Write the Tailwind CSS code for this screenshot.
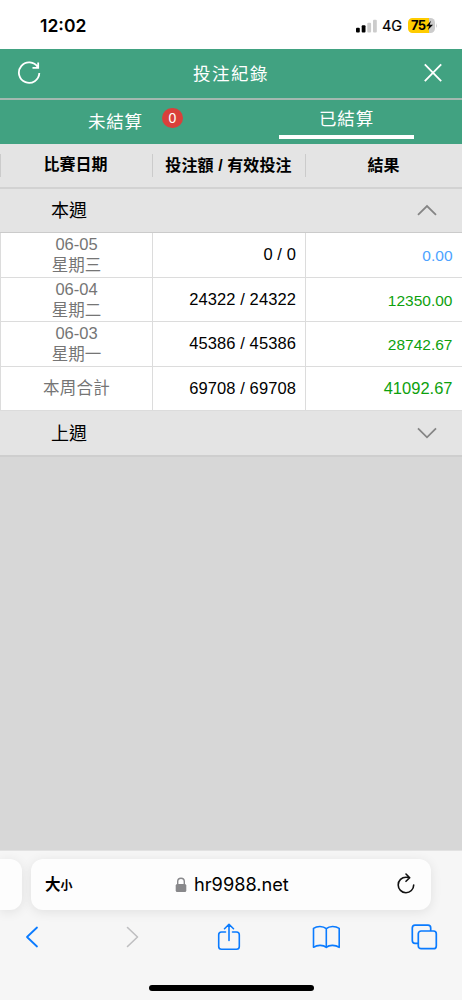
<!DOCTYPE html>
<html lang="zh-Hant">
<head>
<meta charset="utf-8">
<meta name="viewport" content="width=device-width, initial-scale=1">
<title>投注紀錄</title>
<script src="https://cdn.jsdelivr.net/npm/@tailwindcss/browser@4"></script>
</head>
<body class="flex h-[1000px] w-[462px] flex-col overflow-hidden bg-[#d7d7d7] font-['Liberation_Sans','Noto_Sans_CJK_TC',sans-serif] text-black">

<!-- Status bar -->
<div class="flex h-[49px] shrink-0 items-start justify-between bg-white pl-[40px] pr-[24px] pt-[15px]">
  <span class="font-['Inter',sans-serif] text-[17.5px] font-semibold leading-[21px]">12:02</span>
  <div class="flex h-[21px] items-center">
    <svg class="h-[14px] w-[22px]" viewBox="0 0 22 14">
      <rect x="0" y="8.7" width="3.800" height="4.7" rx="1"/>
      <rect x="5.7" y="6.3" width="3.800" height="7.1" rx="1"/>
      <rect x="11.3" y="3.7" width="3.800" height="9.7" rx="1" fill="#ccc"/>
      <rect x="17" y="0.7" width="3.800" height="12.7" rx="1" fill="#ccc"/>
    </svg>
    <span class="ml-[4px] w-[21px] font-['Inter',sans-serif] text-[14.500px] leading-[21px] [-webkit-text-stroke:0.200px_black]">4G</span>
    <svg class="ml-[5px] h-[15px] w-[30px]" viewBox="0 0 30 15">
      <path d="M4.5 0H22V15H4.5A4.5 4.5 0 0 1 0 10.500V4.500A4.500 4.500 0 0 1 4.500 0Z" fill="#fc0"/>
      <path d="M21 0H22.500A4.500 4.500 0 0 1 27 4.500V10.500A4.500 4.500 0 0 1 22.500 15H21Z" fill="#ccc"/>
      <path d="M28 5Q29.700 7.500 28 10Z" fill="#ccc"/>
      <text x="3" y="12" font-size="13" font-weight="700" font-family="Inter" textLength="15">75</text>
      <path d="M23 2.700L18 8.200H21.200L19.700 12.300L25 6.700H21.700Z"/>
    </svg>
  </div>
</div>

<!-- Title bar -->
<div class="flex h-[51px] shrink-0 items-center justify-between border-b-2 border-[#a3b9b0] bg-[#41a281] pl-[17px] pr-[19px] text-white">
  <svg class="mt-[-1px] h-[24px] w-[25px]" viewBox="0 0 25 24" fill="none" stroke="#fff" stroke-width="1.800"><path d="M20.800 6.300A10.200 10.200 0 1 0 22.300 12M15.500 6.900H21.200V1.500"/></svg>
  <span class="mr-[3px] text-[17.500px] leading-[26px] tracking-[1.500px]">投注紀錄</span>
  <svg class="mt-[-1px] h-[20px] w-[20px]" viewBox="0 0 20 20" fill="none" stroke="#fff" stroke-width="1.800"><path d="M1.800 1.300L18.200 18.200M18.200 1.300L1.800 18.200"/></svg>
</div>

<!-- Tabs -->
<div class="grid h-[44px] shrink-0 grid-cols-2 bg-[#41a281] text-white">
  <div class="flex items-start pl-[88px] pt-[9px]">
    <span class="text-[17.500px] leading-[26px] tracking-[0.800px]">未結算</span>
    <span class="ml-[19px] mt-[-1px] flex h-[20px] w-[21px] items-center justify-center rounded-full bg-[#d9403b] text-[14px] leading-[20px]">0</span>
  </div>
  <div class="flex flex-col items-center pt-[6px]">
    <span class="text-[17.500px] leading-[26px] tracking-[0.800px]">已結算</span>
    <span class="mt-[3px] h-[3.500px] w-[135px] bg-white"></span>
  </div>
</div>

<!-- Column headings -->
<div class="grid h-[44.500px] shrink-0 grid-cols-[152px_153px_1fr] items-center border-b-2 border-[#d2d2d2] bg-[#e4e4e4] text-center text-[16px] font-bold">
  <div class="h-[23px] border-l border-[#cbcbcb] pr-[2px] leading-[22px]">比賽日期</div>
  <div class="h-[23px] border-l border-[#cbcbcb] pr-[1px] leading-[24px] tracking-[0.100px]">投注額 / 有效投注</div>
  <div class="h-[23px] border-l border-[#cbcbcb] pr-[1px] leading-[24px]">結果</div>
</div>

<!-- This week -->
<div class="flex h-[44.500px] shrink-0 items-center justify-between border-b border-[#cbcbcb] bg-[#e4e4e4] pl-[51px] pr-[25px]">
  <span class="pt-[2px] text-[18px] leading-[26px]">本週</span>
  <svg class="h-[12px] w-[20px]" viewBox="0 0 20 12" fill="none" stroke="#858585" stroke-width="1.800"><path d="M1 10.900L10 2L19 10.900"/></svg>
</div>

<div class="shrink-0 bg-white text-[16.500px]">
  <div class="grid h-[44.500px] grid-cols-[152px_153px_1fr] border-b border-[#dcdcdc]">
    <div class="border-l border-[#dcdcdc] pt-[1px] text-center leading-[21px] text-[#757575]">06-05<br>星期三</div>
    <div class="border-l border-[#dcdcdc] pr-[9px] text-right leading-[43px] tracking-[0.100px]">0 / 0</div>
    <div class="border-l border-[#dcdcdc] pr-[9.500px] text-right text-[15.500px] leading-[45px] text-[#4da3ff]">0.00</div>
  </div>
  <div class="grid h-[44.500px] grid-cols-[152px_153px_1fr] border-b border-[#dcdcdc]">
    <div class="border-l border-[#dcdcdc] pt-[1px] text-center leading-[21px] text-[#757575]">06-04<br>星期二</div>
    <div class="border-l border-[#dcdcdc] pr-[9px] text-right leading-[43px] tracking-[0.100px]">24322 / 24322</div>
    <div class="border-l border-[#dcdcdc] pr-[9.500px] text-right text-[15.500px] leading-[45px] text-[#0da10d]">12350.00</div>
  </div>
  <div class="grid h-[44.500px] grid-cols-[152px_153px_1fr] border-b border-[#dcdcdc]">
    <div class="border-l border-[#dcdcdc] pt-[1px] text-center leading-[21px] text-[#757575]">06-03<br>星期一</div>
    <div class="border-l border-[#dcdcdc] pr-[9px] text-right leading-[43px] tracking-[0.100px]">45386 / 45386</div>
    <div class="border-l border-[#dcdcdc] pr-[9.500px] text-right text-[15.500px] leading-[45px] text-[#0da10d]">28742.67</div>
  </div>
  <div class="grid h-[44.500px] grid-cols-[152px_153px_1fr] border-b border-[#dcdcdc]">
    <div class="border-l border-[#dcdcdc] text-center leading-[43px] tracking-[0.200px] text-[#757575]">本周合計</div>
    <div class="border-l border-[#dcdcdc] pr-[9px] text-right leading-[43px] tracking-[0.100px]">69708 / 69708</div>
    <div class="border-l border-[#dcdcdc] pr-[9.500px] text-right leading-[43px] text-[#0da10d]">41092.67</div>
  </div>
</div>

<!-- Last week -->
<div class="flex h-[45.500px] shrink-0 items-center justify-between border-b-2 border-[#cecece] bg-[#e4e4e4] pl-[51px] pr-[25px]">
  <span class="pt-[2px] text-[18px] leading-[26px]">上週</span>
  <svg class="h-[12px] w-[20px]" viewBox="0 0 20 12" fill="none" stroke="#858585" stroke-width="1.800"><path d="M1 1.400L10 10.300L19 1.400"/></svg>
</div>

<div class="flex-1"></div>

<!-- Browser bar -->
<div class="flex h-[150px] shrink-0 flex-col border-t border-[#e2e2e2] bg-[#f6f6f6]">
  <div class="mt-[8px] flex h-[51px] gap-[9px]">
    <div class="w-[22px] rounded-r-[12px] bg-[#fdfdfd] shadow-[0_2px_12px_rgba(0,0,0,0.09)]"></div>
    <div class="flex w-[400px] items-center rounded-[12px] bg-[#fdfdfd] pl-[14px] pr-[16px] shadow-[0_2px_12px_rgba(0,0,0,0.09)]">
      <span class="flex w-[130px] items-baseline pt-[2px] font-bold leading-[24px]"><span class="text-[15.500px]">大</span><span class="text-[12px]">小</span></span>
      <svg class="h-[16px] w-[12px]" viewBox="0 0 12 16"><rect x="0.700" y="7" width="10.600" height="8" rx="1.500" fill="#88888b"/><path d="M2.700 7V4.500A3.300 3.300 0 0 1 9.300 4.500V7" fill="none" stroke="#88888b" stroke-width="1.400"/></svg>
      <span class="mb-[1px] ml-[7px] font-['Inter',sans-serif] text-[18.200px] leading-[24px]">hr9988.net</span>
      <svg class="mb-[1px] ml-auto h-[22px] w-[18px]" viewBox="0 0 18 22" fill="none" stroke="#111" stroke-width="1.600" stroke-linecap="round" stroke-linejoin="round"><path d="M16.700 12A7.750 7.750 0 1 1 9 4.200Q10.500 4.100 12.400 4.700M9 1L12.700 4.700L9 8.300"/></svg>
    </div>
  </div>
  <div class="flex h-[54px] items-center pl-[25px] text-[#0a7bff]">
    <svg class="h-[22px] w-[14px]" viewBox="0 0 14 22" fill="none" stroke="currentColor" stroke-width="1.800" stroke-linecap="round" stroke-linejoin="round"><path d="M12 1.500L2 11L12 20.500"/></svg>
    <svg class="ml-[86px] h-[22px] w-[14px]" viewBox="0 0 14 22" fill="none" stroke="#bfbfc1" stroke-width="1.600" stroke-linecap="round" stroke-linejoin="round"><path d="M2.500 1.500L12.500 11L2.500 20.500"/></svg>
    <svg class="ml-[78px] h-[28px] w-[24px]" viewBox="0 0 24 28" fill="none" stroke="currentColor" stroke-width="1.600" stroke-linecap="round" stroke-linejoin="round"><path d="M8.500 9H4.500Q1.700 9 1.700 11.800V23.500Q1.700 26.300 4.500 26.300H19.500Q22.300 26.300 22.300 23.500V11.800Q22.300 9 19.500 9H15.500M12 17.500V1.500M7.500 5.700L12 1.300L16.500 5.700"/></svg>
    <svg class="ml-[71px] h-[24px] w-[28px]" viewBox="0 0 28 24" fill="none" stroke="currentColor" stroke-width="1.600" stroke-linejoin="round"><path d="M14.300 3.700C11 0.700 5 0.900 1.500 3.300V22.300C5 20 11 19.500 14.300 22.300C17.500 19.500 23.500 20 27.200 22.300V3.300C23.500 0.900 17.500 0.700 14.300 3.700V22.300"/></svg>
    <svg class="ml-[71px] h-[26px] w-[27px]" viewBox="0 0 27 26" fill="none" stroke="currentColor" stroke-width="1.700"><path d="M7 19.300H4Q1.300 19.300 1.300 16.500V4Q1.300 1.200 4 1.200H17Q19.700 1.200 19.700 4V7"/><rect x="7.300" y="7" width="18" height="17.700" rx="2.800"/></svg>
  </div>
  <div class="mx-auto mt-[21px] h-[6px] w-[165px] rounded-full bg-black"></div>
</div>
</body>
</html>
